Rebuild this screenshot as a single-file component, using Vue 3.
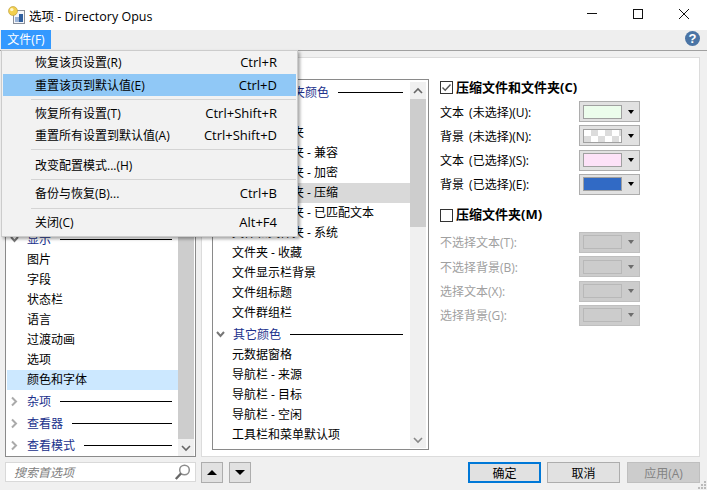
<template>
  <div class="window">
    <div class="titlebar">
      <svg class="app-icon" width="17" height="18" viewBox="0 0 17 18">
        <rect x="5.5" y="4.5" width="11" height="13" fill="#f4f6fa" stroke="#8a8f99" />
        <rect x="7" y="11" width="4" height="5" fill="#9db4d6" />
        <rect x="11" y="8" width="4" height="8" fill="#2f5f9f" />
        <circle cx="5" cy="5" r="4.5" fill="#f2cf4e" stroke="#b89a3a" stroke-width="0.6" />
        <circle cx="3.8" cy="3.6" r="1.7" fill="#fff6c8" />
      </svg>
      <span class="title-text">选项 - Directory Opus</span>
      <div class="win-buttons">
        <svg width="12" height="12" viewBox="0 0 12 12"><path d="M1 5.5H11" stroke="#111" /></svg>
        <svg width="12" height="12" viewBox="0 0 12 12"><rect x="1.5" y="1.5" width="9" height="9" fill="none" stroke="#111" /></svg>
        <svg width="12" height="12" viewBox="0 0 12 12"><path d="M1 1L11 11M11 1L1 11" stroke="#111" /></svg>
      </div>
    </div>

    <div class="menubar">
      <div class="menu-title">文件(F)</div>
      <div class="help">?</div>
    </div>

    <div class="body">
      <div class="left-col">
        <div class="tree">
          <div class="rows tree-rows">
            <template v-for="row in treeRows" :key="row.text">
              <div v-if="row.group" class="group-row">
                <svg class="chevron" width="9" height="11" viewBox="0 0 9 11">
                  <path v-if="row.open" d="M1 3L4.5 7L8 3" fill="none" stroke="#777" stroke-width="2" />
                  <path v-else d="M2 1.5L6 5.5L2 9.5" fill="none" stroke="#aaa" stroke-width="2" />
                </svg>
                <span class="group-text">{{ row.text }}</span>
                <span class="group-line"></span>
              </div>
              <div v-else class="item-row" :class="{ selected: row.selected }">{{ row.text }}</div>
            </template>
          </div>
          <div class="scrollbar">
            <div class="thumb grow"></div>
            <div class="scroll-btn">
              <svg width="10" height="8" viewBox="0 0 10 8"><path d="M1 2L5 6L9 2" fill="none" stroke="#666" stroke-width="1.6" /></svg>
            </div>
          </div>
        </div>
        <div class="search">
          <span class="search-text">搜索首选项</span>
          <svg class="search-icon" width="17" height="17" viewBox="0 0 17 17">
            <circle cx="10.5" cy="6" r="4.8" fill="#fff" stroke="#8c8c8c" stroke-width="1.5" />
            <path d="M7 9.5L1.8 15" stroke="#666" stroke-width="2.4" />
          </svg>
        </div>
      </div>

      <div class="right-col">
        <div class="panel">
          <div class="list">
            <div class="rows list-rows">
              <template v-for="row in listRows" :key="row.text">
                <div v-if="row.group" class="group-row">
                  <svg class="chevron" width="9" height="11" viewBox="0 0 9 11">
                    <path d="M1 3L4.5 7L8 3" fill="none" stroke="#777" stroke-width="2" />
                  </svg>
                  <span class="group-text">{{ row.text }}</span>
                  <span class="group-line"></span>
                </div>
                <div v-else class="item-row" :class="{ current: row.current }">{{ row.text }}</div>
              </template>
            </div>
            <div class="scrollbar list-scroll">
              <div class="scroll-btn">
                <svg width="10" height="8" viewBox="0 0 10 8"><path d="M1 6L5 2L9 6" fill="none" stroke="#666" stroke-width="1.6" /></svg>
              </div>
              <div class="thumb list-thumb"></div>
              <div class="grow"></div>
              <div class="scroll-btn">
                <svg width="10" height="8" viewBox="0 0 10 8"><path d="M1 2L5 6L9 2" fill="none" stroke="#888" stroke-width="1.6" /></svg>
              </div>
            </div>
          </div>

          <div class="settings">
            <div class="section">
              <div class="section-head">
                <svg class="checkbox" width="13" height="13" viewBox="0 0 13 13">
                  <rect x="0.5" y="0.5" width="12" height="12" fill="#fff" stroke="#333" />
                  <path d="M2.5 6.5L5.2 9.2L10.5 3.5" fill="none" stroke="#555" stroke-width="1.4" />
                </svg>
                <span class="head-text">压缩文件和文件夹(C)</span>
              </div>
              <div v-for="row in enabledRows" :key="row.label" class="color-row">
                <span>{{ row.label }}</span>
                <div class="combo">
                  <span class="swatch" :class="row.swatchClass" :style="{ background: row.color }"></span>
                  <span class="tri-down"></span>
                </div>
              </div>
            </div>

            <div class="section second">
              <div class="section-head">
                <svg class="checkbox" width="13" height="13" viewBox="0 0 13 13">
                  <rect x="0.5" y="0.5" width="12" height="12" fill="#fff" stroke="#333" />
                </svg>
                <span class="head-text">压缩文件夹(M)</span>
              </div>
              <div v-for="label in disabledRows" :key="label" class="color-row disabled">
                <span>{{ label }}</span>
                <div class="combo">
                  <span class="swatch"></span>
                  <span class="tri-down"></span>
                </div>
              </div>
            </div>
          </div>
        </div>

        <div class="footer">
          <button class="small-btn"><span class="tri-up big"></span></button>
          <button class="small-btn"><span class="tri-down big"></span></button>
          <div class="grow"></div>
          <button class="btn primary">确定</button>
          <button class="btn">取消</button>
          <button class="btn off">应用(A)</button>
        </div>
      </div>
    </div>

    <div class="grip">
      <i v-for="n in 6" :key="n" :class="'dot' + n"></i>
    </div>

    <div class="menu">
      <template v-for="(entry, i) in menuEntries" :key="i">
        <div v-if="entry.sep" class="menu-sep" :style="{ marginTop: entry.top + 'px', marginBottom: entry.bottom + 'px' }"></div>
        <div v-else class="menu-item" :class="{ hot: entry.hot }">
          <span>{{ entry.text }}</span>
          <span class="menu-key">{{ entry.key }}</span>
        </div>
      </template>
    </div>
  </div>
</template>

<script setup>
const treeRows = [
  { text: '显示', group: true, open: true },
  { text: '图片' },
  { text: '字段' },
  { text: '状态栏' },
  { text: '语言' },
  { text: '过渡动画' },
  { text: '选项' },
  { text: '颜色和字体', selected: true },
  { text: '杂项', group: true },
  { text: '查看器', group: true },
  { text: '查看模式', group: true },
]

const listRows = [
  { text: '文件和文件夹颜色', group: true },
  { text: '文件' },
  { text: '文件和文件夹' },
  { text: '文件和文件夹 - 兼容' },
  { text: '文件和文件夹 - 加密' },
  { text: '文件和文件夹 - 压缩', current: true },
  { text: '文件和文件夹 - 已匹配文本' },
  { text: '文件和文件夹 - 系统' },
  { text: '文件夹 - 收藏' },
  { text: '文件显示栏背景' },
  { text: '文件组标题' },
  { text: '文件群组栏' },
  { text: '其它颜色', group: true },
  { text: '元数据窗格' },
  { text: '导航栏 - 来源' },
  { text: '导航栏 - 目标' },
  { text: '导航栏 - 空闲' },
  { text: '工具栏和菜单默认项' },
]

const enabledRows = [
  { label: '文本 (未选择)(U):', color: '#ecfdec' },
  { label: '背景 (未选择)(N):', swatchClass: 'checker' },
  { label: '文本 (已选择)(S):', color: '#fde2f8' },
  { label: '背景 (已选择)(E):', color: '#316ac5' },
]

const disabledRows = ['不选择文本(T):', '不选择背景(B):', '选择文本(X):', '选择背景(G):']

const menuEntries = [
  { text: '恢复该页设置(R)', key: 'Ctrl+R' },
  { text: '重置该页到默认值(E)', key: 'Ctrl+D', hot: true },
  { sep: true, top: 3, bottom: 2 },
  { text: '恢复所有设置(T)', key: 'Ctrl+Shift+R' },
  { text: '重置所有设置到默认值(A)', key: 'Ctrl+Shift+D' },
  { sep: true, top: 3, bottom: 4 },
  { text: '改变配置模式...(H)', key: '' },
  { sep: true, top: 3, bottom: 2 },
  { text: '备份与恢复(B)...', key: 'Ctrl+B' },
  { sep: true, top: 4, bottom: 2 },
  { text: '关闭(C)', key: 'Alt+F4' },
]
</script>

<style>
html,
body {
  margin: 0;
  overflow: hidden;
}
</style>

<style scoped>
.window {
  position: relative;
  display: flex;
  flex-direction: column;
  width: 707px;
  height: 490px;
  overflow: hidden;
  background: #f0f0f0;
  color: #000;
  font-family: "Open Sans", "Noto Sans CJK SC", sans-serif;
  font-size: 12px;
}

.titlebar {
  display: flex;
  align-items: center;
  flex: none;
  height: 30px;
  padding-left: 8px;
  background: #fff;
}

.app-icon {
  margin-right: 4px;
}

.title-text {
  flex: 1;
  font-size: 12.5px;
}

.win-buttons {
  display: flex;
  gap: 34px;
  margin-right: 17px;
  margin-bottom: 2px;
}

.menubar {
  display: flex;
  align-items: flex-start;
  justify-content: space-between;
  flex: none;
  height: 20px;
  padding-left: 1px;
  padding-right: 7px;
  background: #eee;
  border-bottom: 1px solid #a0a0a0;
}

.menu-title {
  width: 50px;
  height: 19px;
  line-height: 19px;
  text-align: center;
  background: #3399ff;
  color: #fff;
  font-size: 12px;
}

.help {
  width: 15px;
  height: 15px;
  margin-top: 1px;
  border-radius: 50%;
  background: #4a74a5;
  color: #fff;
  font-family: "Liberation Sans", sans-serif;
  font-size: 13px;
  font-weight: bold;
  line-height: 15px;
  text-align: center;
}

.body {
  display: flex;
  flex: 1;
  gap: 5px;
  padding: 6px 7px 7px 5px;
  min-height: 0;
}

.left-col {
  display: flex;
  flex-direction: column;
  gap: 5px;
  width: 191px;
}

.right-col {
  display: flex;
  flex-direction: column;
  gap: 5px;
  flex: 1;
  min-width: 0;
}

.tree {
  display: flex;
  flex: 1;
  min-height: 0;
  background: #fff;
  border: 1px solid #8a8a8a;
}

.rows {
  display: flex;
  flex-direction: column;
  flex: 1;
  min-width: 0;
  overflow: hidden;
}

.tree-rows {
  justify-content: flex-end;
}

.group-row {
  display: flex;
  align-items: center;
  flex: none;
  height: 22px;
  padding-left: 4px;
  padding-right: 6px;
  color: #20308c;
}

.chevron {
  flex: none;
  margin-right: 8px;
}

.group-text {
  flex: none;
}

.group-line {
  flex: 1;
  height: 1px;
  margin-left: 9px;
  background: #000;
}

.item-row {
  flex: none;
  height: 20px;
  line-height: 20px;
  padding-left: 20px;
  white-space: nowrap;
}

.tree-rows .item-row {
  margin-left: 1px;
}

.item-row.selected {
  background: #cce8ff;
}

.item-row.current {
  background: #d9d9d9;
}

.scrollbar {
  display: flex;
  flex-direction: column;
  flex: none;
  width: 16px;
  margin-right: 1px;
  background: #f0f0f0;
}

.thumb {
  background: #cdcdcd;
}

.scroll-btn {
  display: flex;
  align-items: center;
  justify-content: center;
  flex: none;
  height: 17px;
}

.grow {
  flex: 1;
}

.search {
  display: flex;
  align-items: center;
  justify-content: space-between;
  flex: none;
  height: 20px;
  box-sizing: border-box;
  margin-bottom: 1px;
  padding: 0 4px 0 8px;
  background: #fff;
  border: 1px solid #d9d9d9;
}

.search-text {
  color: #808080;
  font-style: italic;
}

.panel {
  display: flex;
  flex: 1;
  min-height: 0;
  box-sizing: border-box;
  padding: 21px 0 6px 10px;
  background: #fff;
  border: 1px solid #dcdcdc;
}

.list {
  display: flex;
  flex: none;
  width: 215px;
  background: #fff;
  border: 1px solid #8a8a8a;
}

.list-rows {
  padding-top: 1px;
}

.list-rows .group-row {
  padding-left: 3px;
  padding-right: 7px;
}

.list-rows .item-row {
  padding-left: 19px;
}

.list-scroll {
  margin-top: 2px;
  margin-right: 2px;
  margin-bottom: 1px;
}

.list-thumb {
  height: 128px;
  flex: none;
}

.settings {
  flex: 1;
  padding-top: 2px;
  padding-left: 11px;
}

.section.second {
  margin-top: 14px;
}

.section-head {
  display: flex;
  align-items: center;
  gap: 3px;
  height: 13px;
  margin-bottom: 7px;
  font-size: 13px;
  font-weight: bold;
}

.head-text {
  line-height: 13px;
  margin-top: -1px;
}

.second .section-head {
  margin-bottom: 10px;
}

.second {
  padding-top: 0;
}

.checkbox {
  flex: none;
}

.color-row {
  display: flex;
  align-items: center;
  justify-content: space-between;
  width: 200px;
  height: 21px;
  margin-bottom: 3.33px;
  word-spacing: 2px;
}

.combo {
  display: flex;
  align-items: center;
  box-sizing: border-box;
  width: 61px;
  height: 21px;
  padding-left: 3px;
  background: #e1e1e1;
  border: 1px solid #adadad;
}

.swatch {
  display: block;
  box-sizing: border-box;
  width: 39px;
  height: 14px;
  border: 1px solid #a0a0a0;
}

.swatch.checker {
  background: repeating-conic-gradient(#dcdcdc 0 25%, #fff 0 50%) 0 0 / 14px 12px !important;
}

.disabled {
  color: #a0a0a0;
}

.disabled .combo {
  background: #ccc;
  border-color: #bfbfbf;
}

.disabled .swatch {
  border-color: #b8b8b8;
}

.disabled .tri-down {
  border-top-color: #6d6d6d;
}

.tri-down {
  width: 0;
  height: 0;
  margin-left: 6px;
  border-left: 3.5px solid transparent;
  border-right: 3.5px solid transparent;
  border-top: 4px solid #000;
}

.tri-up {
  width: 0;
  height: 0;
  border-left: 3.5px solid transparent;
  border-right: 3.5px solid transparent;
  border-bottom: 4px solid #000;
}

.tri-up.big,
.tri-down.big {
  display: block;
  margin: 0;
  border-left-width: 5px;
  border-right-width: 5px;
}

.tri-up.big {
  border-bottom-width: 5px;
}

.tri-down.big {
  border-top-width: 5px;
}

.footer {
  display: flex;
  flex: none;
  gap: 6px;
  height: 21px;
}

.small-btn {
  display: flex;
  align-items: center;
  justify-content: center;
  box-sizing: border-box;
  width: 22px;
  height: 21px;
  padding: 0;
  background: #e1e1e1;
  border: 1px solid #adadad;
}

.btn {
  box-sizing: border-box;
  width: 73px;
  height: 21px;
  padding: 0;
  background: #e1e1e1;
  border: 1px solid #adadad;
  color: #000;
  font: inherit;
}

.btn.primary {
  border: 2px solid #0078d7;
}

.btn.off {
  margin-left: 1px;
  background: #ccc;
  border-color: #bfbfbf;
  color: #838383;
}

.grip {
  position: absolute;
  right: 0;
  bottom: 0;
  width: 9px;
  height: 9px;
}

.grip i {
  position: absolute;
  width: 2px;
  height: 2px;
  background: #bbb;
}

.dot1 { right: 1px; bottom: 1px; }
.dot2 { right: 4px; bottom: 1px; }
.dot3 { right: 7px; bottom: 1px; }
.dot4 { right: 1px; bottom: 4px; }
.dot5 { right: 4px; bottom: 4px; }
.dot6 { right: 1px; bottom: 7px; }

.menu {
  position: absolute;
  left: 1px;
  top: 50px;
  box-sizing: border-box;
  width: 297px;
  height: 187px;
  background: #f2f2f2;
  border: 1px solid #ccc;
  box-shadow: 2px 2px 3px rgba(0, 0, 0, 0.35);
}

.menu-item {
  display: flex;
  align-items: center;
  justify-content: space-between;
  height: 22px;
  margin: 0 1px;
  padding: 0 19px 0 32px;
}

.menu-key {
  font-size: 13px;
}

.menu-item.hot {
  margin-top: 1px;
  background: #90c8f6;
}

.menu-sep {
  height: 1px;
  margin-left: 29px;
  margin-right: 1px;
  background: #d4d4d4;
}
</style>
